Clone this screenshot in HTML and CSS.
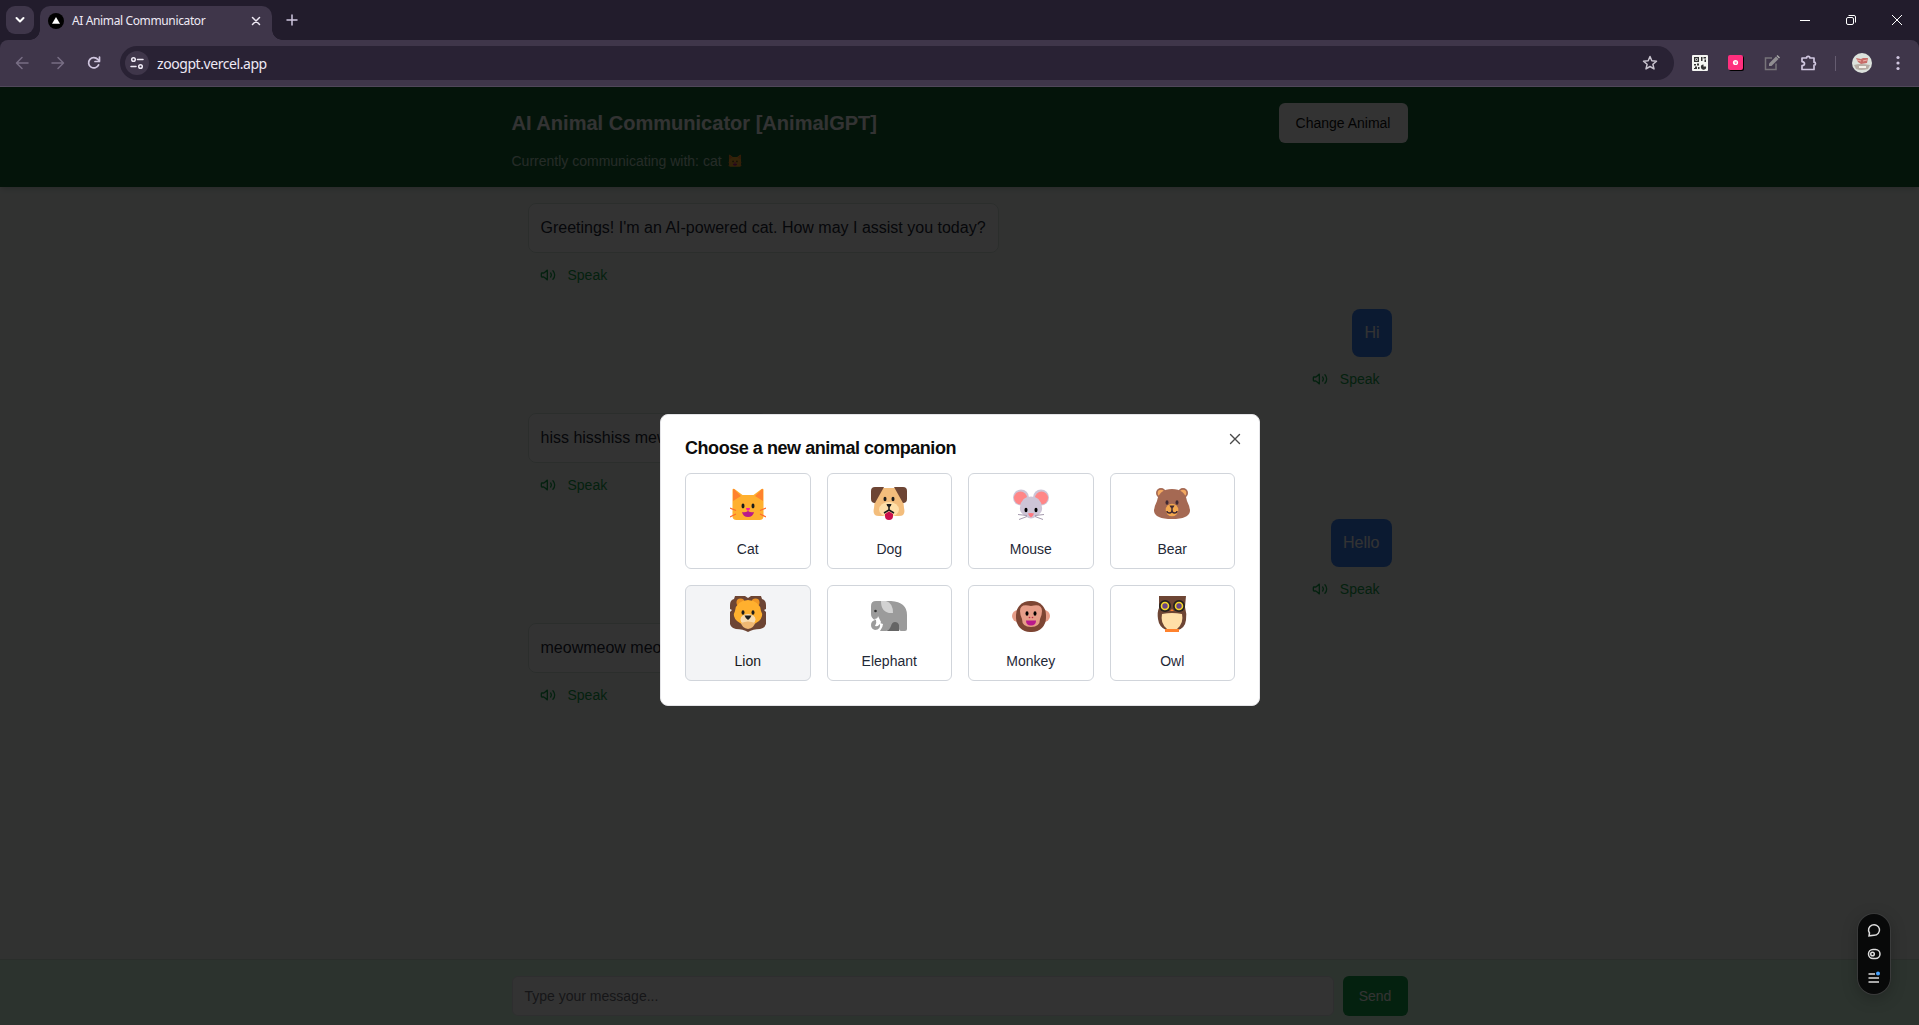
FILE: index.html
```html
<!DOCTYPE html>
<html lang="en">
<head>
<meta charset="utf-8">
<title>AI Animal Communicator</title>
<link rel="stylesheet" href="styles.css">
</head>
<body>
<svg width="0" height="0" class="defs">
  <symbol id="speaker" viewBox="0 0 24 24"><path d="M11 4.700 6.400 8.600a1.400 1.400 0 0 1-1 .4H3a1 1 0 0 0-1 1v4a1 1 0 0 0 1 1h2.400a1.400 1.400 0 0 1 1 .4L11 19.300ZM16 9a5 5 0 0 1 0 6M19.400 18.400a9 9 0 0 0 0-12.700" fill="none" stroke="currentColor" stroke-width="2" stroke-linecap="round" stroke-linejoin="round"/></symbol>
  <symbol id="cat" viewBox="0 0 36 36">
    <path d="M2.500 3q0-2 2-1l8 6h11l8-6q2-1 2 1v26q0 4-4 4h-23q-4 0-4-4Z" fill="#ffb02e"/>
    <path d="M3 3q0-2 2 0l6 6-8 5ZM33 3q0-2-2 0l-6 6 8 5Z" fill="#ff822d"/>
    <path d="m0 21 6 2.500M0 30l6-3M36 21l-6 2.500M36 30l-6-3" stroke="#ff6d2d" stroke-width="1.200"/>
    <ellipse cx="13" cy="19" rx="1.500" ry="2.400" fill="#1c1c1c"/><ellipse cx="23" cy="19" rx="1.500" ry="2.400" fill="#1c1c1c"/>
    <path d="M16 21h4q0 2-2 3-2-1-2-3Z" fill="#ff1aa0"/><path d="M12 25q3 1 6-1 3 2 6 1-1 5-6 5t-6-5Z" fill="#b91a8b"/>
  </symbol>
</svg>

<div class="browser">
  <div class="tabstrip">
    <div class="tab-search"><svg width="12" height="12" viewBox="0 0 12 12"><path d="m2.500 4 3.500 3.500L9.500 4" class="ln w2"/></svg></div>
    <div class="tab">
      <svg width="16" height="16" viewBox="0 0 16 16"><circle cx="8" cy="8" r="8"/><path d="m8 4 4 6.800H4Z" fill="#fff"/></svg>
      <span class="tab-title">AI Animal Communicator</span>
      <svg class="tab-close" width="10" height="10" viewBox="0 0 10 10"><path d="m1.500 1.500 7 7m0-7-7 7" class="ln w15"/></svg>
    </div>
    <svg class="newtab" width="12" height="12" viewBox="0 0 12 12"><path d="M6 1v10M1 6h10" class="ln w15"/></svg>
    <div class="window-buttons">
      <svg width="12" height="12" viewBox="0 0 12 12"><path d="M1 6.500h10" class="wh"/></svg>
      <svg width="12" height="12" viewBox="0 0 12 12"><rect x="1.500" y="3.500" width="7" height="7" rx="1.500" class="wh"/><path d="M3.500 1.500H9Q10.500 1.500 10.500 3v5.500" class="wh"/></svg>
      <svg width="12" height="12" viewBox="0 0 12 12"><path d="m1 1 10 10m0-10L1 11" class="wh"/></svg>
    </div>
  </div>
  <div class="navbar">
    <div class="nav-buttons">
      <svg class="dim" width="14" height="14" viewBox="0 0 14 14"><path d="M13 7H2m5-5.500L1.500 7 7 12.500" class="ln w15"/></svg>
      <svg class="dim" width="14" height="14" viewBox="0 0 14 14"><path d="M1 7h11M7 1.500 12.500 7 7 12.500" class="ln w15"/></svg>
      <svg width="14" height="14" viewBox="0 0 14 14"><path d="M11.600 8.800A5.200 5.200 0 1 1 10.800 3.400L12.500 5M12.500 1v4.500H8" class="ln w17"/></svg>
    </div>
    <div class="address">
      <div class="site-info"><svg width="14" height="14" viewBox="0 0 14 14"><circle cx="3.500" cy="3.500" r="1.800" class="ln w15"/><path d="M7.500 3.500H13M1 10.500h5" class="ln w15"/><circle cx="10.500" cy="10.500" r="1.800" class="ln w15"/></svg></div>
      <span>zoogpt.vercel.app</span>
      <svg class="star" width="16" height="16" viewBox="0 0 16 16"><path d="m8 1.500 1.800 4.300 4.700.4-3.600 3.100 1.100 4.600L8 11.500l-4 2.400 1.100-4.600-3.600-3.100 4.700-.4Z" class="ln w15"/></svg>
    </div>
    <div class="extensions">
      <svg width="16" height="16" viewBox="0 0 16 16"><rect width="16" height="16" rx="1" fill="#f4f5f2"/><g fill="#333"><path d="M2 2h5v5H2ZM9 2h1.500v4H9ZM11.500 2H14v1.500h-2.500ZM12.500 4.500H14V7h-1.500ZM2 9h2v1.500H2ZM5 8.500h2v2H5ZM3 11.500h2V14H2v-1h1ZM6 12h1.500v2H6Z"/><path d="M11.500 9.500v2H14a2.600 2.600 0 1 1-2.500-2Z"/></g><path d="M3.300 3.300h2.400v2.400H3.300Z" fill="#f4f5f2"/><path d="M4 4h1v1H4Z" fill="#333"/></svg>
      <svg width="16" height="16" viewBox="0 0 16 16"><rect x="1" y="1" width="15" height="15" rx="2"/><rect width="15" height="15" rx="2" fill="#ff2f7e"/><circle cx="7.500" cy="7.500" r="2.600" fill="#fff"/><path d="M6.500 7.200h2.300M7 8.300h1.500" stroke="#ff2f7e" stroke-width=".7"/></svg>
      <svg width="16" height="16" viewBox="0 0 16 16"><path d="M8 3H1.500v11.500H12V8.500" fill="none" stroke="#77747a" stroke-width="1.500"/><path d="m5 8.500 7-7L14.500 4l-7 7H5Z" fill="#908e91"/><path d="m12.500 1 1-1L16 2.500l-1 1Z" fill="#aaa"/></svg>
      <svg class="puzzle" width="18" height="18" viewBox="0 0 18 18"><path d="M2 4h4.500a1.700 1.700 0 0 1 3.400 0H14v4.200a1.500 1.500 0 0 1 0 3V15.500H2v-3.800q2.500-.3 2.500-2T2 7.700Z" class="ln w17"/></svg>
      <i class="divider"></i>
      <svg class="avatar" width="20" height="20" viewBox="0 0 20 20"><circle cx="10" cy="10" r="10" fill="#dce2dc"/><path d="m4 5 5 1 2-1 5 0-1 5-6 1-3-2Z" fill="#c76d68"/><path d="m5 7 4 1m2 0 4-1" stroke="#efb2a8" fill="none"/><path d="M2 12q6-2 16 0l-2 4q-7 2-12 0Z" fill="#b7ada4"/><path d="M7 14h7" stroke="#f4f1e8" stroke-width="2"/></svg>
      <svg class="menu" width="4" height="16" viewBox="0 0 4 16"><g fill="#d0c6df"><circle cx="2" cy="2.500" r="1.600"/><circle cx="2" cy="8" r="1.600"/><circle cx="2" cy="13.500" r="1.600"/></g></svg>
    </div>
  </div>
</div>

<div class="page">
  <header class="header">
    <div class="wrap">
      <div class="header-row"><h1>AI Animal Communicator [AnimalGPT]</h1><button class="change">Change Animal</button></div>
      <p class="status">Currently communicating with: cat <svg width="14" height="14"><use href="#cat"/></svg></p>
    </div>
  </header>
  <main class="chat">
    <div class="message"><div class="bubble">Greetings! I'm an AI-powered cat. How may I assist you today?</div><div class="speak"><svg width="16" height="16"><use href="#speaker"/></svg>Speak</div></div>
    <div class="message user"><div class="bubble">Hi</div><div class="speak"><svg width="16" height="16"><use href="#speaker"/></svg>Speak</div></div>
    <div class="message"><div class="bubble reply">hiss hisshiss mew</div><div class="speak"><svg width="16" height="16"><use href="#speaker"/></svg>Speak</div></div>
    <div class="message user"><div class="bubble">Hello</div><div class="speak"><svg width="16" height="16"><use href="#speaker"/></svg>Speak</div></div>
    <div class="message"><div class="bubble reply">meowmeow meow</div><div class="speak"><svg width="16" height="16"><use href="#speaker"/></svg>Speak</div></div>
  </main>
  <footer class="footer"><div class="wrap compose"><div class="input">Type your message...</div><button class="send">Send</button></div></footer>

  <div class="overlay">
    <section class="dialog">
      <svg class="dialog-close" width="16" height="16" viewBox="0 0 16 16"><path d="m3.500 3.500 9 9m0-9-9 9" fill="none" stroke="#4a4a4a" stroke-width="1.400" stroke-linecap="round"/></svg>
      <h2>Choose a new animal companion</h2>
      <div class="animals">
        <button class="animal"><svg width="36" height="36"><use href="#cat"/></svg><span>Cat</span></button>
        <button class="animal"><svg width="36" height="36" viewBox="0 0 36 36">
          <path d="M5 1h26l2 20q2 8-5 8H8q-7 0-5-8Z" fill="#f3bd7c"/><path d="M4 0h9L4 16q-4 0-4-4V4q0-4 4-4ZM32 0h-9l9 16q4 0 4-4V4q0-4-4-4Z" fill="#6d4534"/><ellipse cx="18" cy="22.500" rx="10" ry="7.500" fill="#ffdfa8"/><ellipse cx="14" cy="12" rx="1.500" ry="2.200" fill="#1c1c1c"/><ellipse cx="22" cy="12" rx="1.500" ry="2.200" fill="#1c1c1c"/><path d="M15.500 17h5q0 2-2.500 3.500-2.500-1.500-2.500-3.500Z" fill="#1c1c1c"/><path d="M18 20v3l-5 3m5-3 5 3" stroke="#1c1c1c" stroke-width="1.500" fill="none"/><path d="m14 27 4-2.500 4 2.500v2a4 4 0 0 1-8 0Z" fill="#cb0f4c"/></svg><span>Dog</span></button>
        <button class="animal"><svg width="36" height="36" viewBox="0 0 36 36">
          <g transform="translate(0 -1.500)"><circle cx="8" cy="12" r="8" fill="#cdc4d6"/><circle cx="28" cy="12" r="8" fill="#cdc4d6"/><circle cx="7.500" cy="12.500" r="6.500" fill="#ff8687"/><circle cx="28.500" cy="12.500" r="6.500" fill="#ff8687"/><path d="M7 22q1-11 11-11t11 11q1 5-6 9-5 4-10 0-7-4-6-9Z" fill="#cdc4d6"/><path d="m5 29 9 1m-8 4 8-3m17-2-9 1m8 4-8-3" stroke="#a59aad"/><ellipse cx="13" cy="24.500" rx="1.500" ry="2.300"/><ellipse cx="23" cy="24.500" rx="1.500" ry="2.300"/><path d="M15 28q3-1 6 0-1 3-3 4-2-1-3-4Z" fill="#ff777f"/></g></svg><span>Mouse</span></button>
        <button class="animal"><svg width="36" height="36" viewBox="0 0 36 36">
          <g transform="translate(0 -1)"><circle cx="7" cy="7" r="5" fill="#a56953"/><circle cx="29" cy="7" r="5" fill="#a56953"/><circle cx="7" cy="7" r="3.300" fill="#f3a860"/><circle cx="29" cy="7" r="3.300" fill="#f3a860"/><path d="M18 3Q31 3 33 15 36 21 36 25 35 33 18 33 1 33 0 25 0 21 3 15 5 3 18 3Z" fill="#a56953"/><circle cx="18" cy="24" r="6.300" fill="#f3a84f"/><ellipse cx="13" cy="16.500" rx="1.500" ry="2.300" fill="#402a32"/><ellipse cx="23" cy="16.500" rx="1.500" ry="2.300" fill="#402a32"/><path d="M15.500 19.500h5q-.5 2-2.500 3-2-1-2.500-3Z" fill="#402a32"/><path d="M18 22v2q0 3-2.500 3T13 25m5-1q0 3 2.500 3T23 25" stroke="#402a32" stroke-width="1.400" fill="none"/></g></svg><span>Bear</span></button>
        <button class="animal low hover"><svg width="36" height="36" viewBox="0 0 36 36">
          <path d="M5 0h10l3 2 3-2h10l1 3q4 1 4 6v4l-2 1 2 2v12q-1 4-6 5-7 0-12 3-5-3-12-3-5-1-6-5V16l2-2-2-1V9q0-5 4-6Z" fill="#6d4534"/><circle cx="10.500" cy="6.500" r="4" fill="#ef9625"/><circle cx="25.500" cy="6.500" r="4" fill="#ef9625"/><path d="M18 4q12 1 13 11 3 5-2 10l-6 4H13l-6-4q-5-5-2-10Q6 5 18 4Z" fill="#ffb02e"/><ellipse cx="18" cy="23.500" rx="7.500" ry="5.500" fill="#f8dbaf"/><path d="M11 27q7-3 14 0-1 5-7 6-6-1-7-6Z" fill="#efb873"/><ellipse cx="13" cy="16.500" rx="1.500" ry="2.300" fill="#1c1c1c"/><ellipse cx="23" cy="16.500" rx="1.500" ry="2.300" fill="#1c1c1c"/><path d="M14.500 19.500h7q-1 3-3.500 4.500-2.500-1.500-3.500-4.500Z" fill="#1c1c1c"/></svg><span>Lion</span></button>
        <button class="animal low"><svg width="36" height="36" viewBox="0 0 36 36">
          <path d="M16 22h12v13H16Z" fill="#656565"/><path d="M5 5H20Q36 6 36 19V33Q36 35 34 35H30Q28 35 28 33V29Q27 26 24 26 21 26 20 30 18 35 15 35H9Q12 31 12 28L9 27Q10 34 4 34 0 33 0 29 0 25 4 24 0 22 0 18V10Q0 5 5 5Z" fill="#9b9b9b"/><path d="M10 5h5q7 2 7 12-12 1-12-12Z" fill="#d2d2d2"/><circle cx="4.500" cy="15" r="1.300" fill="#333"/><path d="M3 23q4 0 4-3l3 6q-2 5-6 4 2-3 1-6Z" fill="#fff"/></svg><span>Elephant</span></button>
        <button class="animal low"><svg width="38" height="36" viewBox="0 0 38 36">
          <circle cx="6" cy="20" r="6" fill="#e69d88"/><circle cx="32" cy="20" r="6" fill="#e69d88"/><rect x="4" y="5" width="30" height="31" rx="14" fill="#7d4533"/><path d="M19 10q11-3 11 5 0 4-2 8 0 8-9 8t-9-8q-2-4-2-8 0-8 11-5Z" fill="#e69d88"/><ellipse cx="15" cy="17.500" rx="1.500" ry="2.300"/><ellipse cx="23" cy="17.500" rx="1.500" ry="2.300"/><circle cx="17.500" cy="21.500" r=".8" fill="#c12846"/><circle cx="20.500" cy="21.500" r=".8" fill="#c12846"/><path d="M14 24.500h10q0 5-5 5t-5-5Z" fill="#b91a8b"/></svg><span>Monkey</span></button>
        <button class="animal low"><svg width="36" height="36" viewBox="0 0 36 36">
          <path d="M5 0h27l-1 11q2 7 1 13-1 8-8 10H12q-7-3-8-11-1-7 1-11Z" fill="#6d4534"/><path d="M8 18q10-2 20 0 2 9-5 15H13Q6 27 8 18Z" fill="#ffdfa8"/><circle cx="11" cy="10" r="6" fill="#24211f"/><circle cx="25" cy="10" r="6" fill="#24211f"/><circle cx="11" cy="10" r="3.500" fill="#694487" stroke="#f4d72a" stroke-width="1.600"/><circle cx="25" cy="10" r="3.500" fill="#694487" stroke="#f4d72a" stroke-width="1.600"/><path d="m16 15 2-2 2 2Z" fill="#ff822d"/><path d="M11 33h14v3H11Z" fill="#ff822d"/></svg><span>Owl</span></button>
      </div>
    </section>
  </div>
  <div class="toolbar">
    <svg width="14" height="14" viewBox="0 0 14 14"><path d="M2 12.800 2.500 10A5.500 5.300 0 1 1 7 12.300Z" class="tool"/></svg>
    <svg width="14" height="14" viewBox="0 0 14 14"><rect x="1.500" y="2.500" width="11.500" height="9" rx="4.500" class="tool"/><circle cx="5.500" cy="7" r="1.800" class="tool"/></svg>
    <svg width="14" height="14" viewBox="0 0 14 14"><path d="M1.500 3H8M1.500 7H12M1.500 11H12" class="tool"/><circle cx="11" cy="2.500" r="2" fill="#47a3ff"/></svg>
  </div>
</div>
</body>
</html>
```
FILE: styles.css
```css
* { box-sizing: border-box; }
body { margin: 0; height: 1025px; display: flex; flex-direction: column; overflow: hidden; font-family: "Liberation Sans", Arial, sans-serif; background: #221c2c; }
svg { flex: none; display: block; }
button { font: inherit; border: 0; padding: 0; }
.defs { position: absolute; }
.ln { fill: none; stroke: currentColor; stroke-linecap: round; stroke-linejoin: round; }
.w15 { stroke-width: 1.5; } .w17 { stroke-width: 1.7; } .w2 { stroke-width: 2; }
.wh { fill: none; stroke: #fff; stroke-width: 1; }

.browser { flex: none; height: 87px; color: #d0c6df; font-family: "Noto Sans", "Open Sans", sans-serif; }
.tabstrip { height: 40px; display: flex; align-items: center; padding-left: 6px; }
.tab-search { width: 28px; height: 28px; border-radius: 9px; background: #3f364a; display: flex; align-items: center; justify-content: center; color: #fff; }
.tab { position: relative; width: 232px; height: 34px; margin: 6px 0 0 6px; padding: 0 11px 5px 8px; border-radius: 10px 10px 0 0; background: #3f364a; display: flex; align-items: center; color: #eee9f4; }
.tab::before, .tab::after { content: ""; position: absolute; bottom: 0; width: 10px; height: 10px; }
.tab::before { left: -10px; background: radial-gradient(circle at 0 0, transparent 9.500px, #3f364a 10px); }
.tab::after { right: -10px; background: radial-gradient(circle at 100% 0, transparent 9.500px, #3f364a 10px); }
.tab-title { margin-left: 8px; font-size: 12px; letter-spacing: -.37px; white-space: nowrap; }
.tab-close { margin-left: auto; }
.newtab { margin-left: 14px; }
.window-buttons { margin-left: auto; display: flex; gap: 34px; padding-right: 16px; }
.navbar { height: 47px; background: #3f364a; border-bottom: 1px solid #51485b; border-radius: 8px 8px 0 0; display: flex; align-items: center; }
.nav-buttons { width: 120px; padding-left: 15px; display: flex; gap: 22px; }
.dim { color: #786e84; }
.address { width: 1554px; height: 34px; border-radius: 17px; background: #292234; display: flex; align-items: center; padding: 0 16px 0 5px; color: #eee9f4; font-size: 14px; }
.address span { letter-spacing: -.43px; }
.site-info { width: 24px; height: 24px; border-radius: 50%; background: #3f364a; display: flex; align-items: center; justify-content: center; margin-right: 8px; }
.star { margin-left: auto; color: #c9c4cf; }
.extensions { flex: 1; display: flex; align-items: center; gap: 20px; padding-left: 18px; }
.puzzle { margin-right: -3px; }
.divider { width: 1px; height: 15px; margin-right: -4px; background: #655c70; }
.menu { margin-left: 4px; }

.page { position: relative; flex: 1; min-height: 0; display: flex; flex-direction: column; background: #f3faf6; }
.wrap { width: 896px; margin: 0 auto; }
.header { height: 100px; flex: none; padding-top: 16px; background: #166534; box-shadow: 0 4px 6px -1px rgba(0,0,0,.1), 0 2px 4px -2px rgba(0,0,0,.1); color: #fff; z-index: 0; }
.header-row { display: flex; justify-content: space-between; align-items: center; }
h1 { margin: 0; font-size: 20px; line-height: 28px; letter-spacing: .02px; }
.change { width: 129px; height: 40px; border-radius: 6px; background: #fff; color: #0f0f0f; font-size: 14px; }
.status { margin: 8px 0 0; font-size: 14px; line-height: 20px; color: #bbd7c4; display: flex; align-items: center; gap: 6px; }
.chat { flex: 1; width: 896px; margin: 0 auto; padding: 16px; display: flex; flex-direction: column; gap: 16px; }
.message { display: flex; flex-direction: column; align-items: flex-start; }
.bubble { padding: 12px; border: 1px solid #d8e5dd; border-radius: 8px; background: #fff; color: #1f2937; font-size: 16px; line-height: 24px; }
.reply { min-width: 240px; }
.user { align-items: flex-end; }
.user .bubble { border: 0; background: #3b82f6; color: #fff; }
.speak { height: 36px; margin-top: 4px; padding: 0 12px; display: flex; align-items: center; gap: 12px; font-size: 14px; color: #16a34a; }
.footer { flex: none; height: 66px; border-top: 1px solid #cfe5d7; padding-top: 16px; background: #dcfce7; }
.compose { display: flex; justify-content: space-between; }
.input { width: 822px; height: 40px; border: 1px solid #e5e7eb; border-radius: 6px; background: #fff; padding: 0 12px; line-height: 38px; font-size: 14px; color: #71717a; }
.send { width: 65px; height: 40px; border-radius: 6px; background: #16a34a; color: #fff; font-size: 14px; }

.overlay { position: absolute; inset: 0; background: rgba(0,0,0,.8); display: flex; justify-content: center; align-items: flex-start; padding: 327px 0 0 1px; }
.dialog { position: relative; width: 600px; height: 292px; border-radius: 8px; background: #fff; border: 1px solid #e4e4e7; padding: 24px; }
.dialog h2 { margin: 0; font-size: 18px; line-height: 18px; letter-spacing: -.45px; color: #0c0c0c; }
.dialog-close { position: absolute; right: 16px; top: 16px; }
.animals { margin-top: 16px; display: grid; grid-template-columns: repeat(4, 1fr); gap: 16px; }
.animal { height: 96px; border: 1px solid #d1d5db; border-radius: 6px; background: #fff; display: flex; flex-direction: column; align-items: center; padding-top: 13px; color: #1f2937; font-size: 14px; line-height: 20px; }
.animal span { margin-top: 16px; }
.low { padding-top: 10px; }
.low span { margin-top: 19px; }
.hover { background: #f3f4f6; color: #18181b; }
.toolbar { position: absolute; right: 29px; bottom: 31px; width: 32px; height: 80px; border-radius: 16px; background: #080909; box-shadow: 0 0 0 1px #3a3b3b, 0 4px 16px rgba(0,0,0,.25); display: flex; flex-direction: column; align-items: center; justify-content: center; gap: 10px; }
.tool { fill: none; stroke: #ddd; stroke-width: 1.5; }
```
